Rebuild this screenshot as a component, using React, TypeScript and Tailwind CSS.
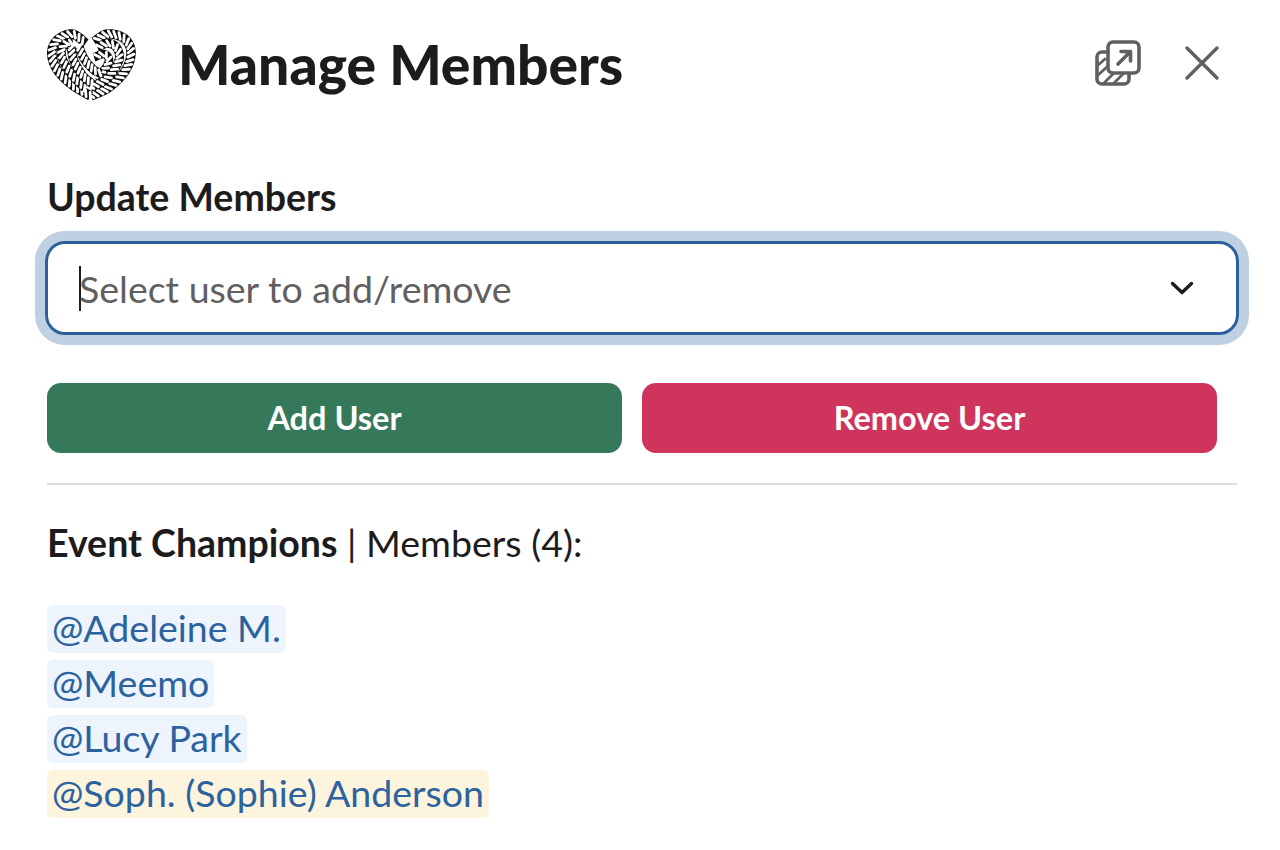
type P = [number, number];

const c = (x: number, y: number): P => [x / 3 - 18, y / 3 - 18];

const ropes: { pts: P[]; w: number }[] = [
  { w: 9.5, pts: [c(185, 258), c(240, 232), c(290, 180), c(306, 125), c(285, 85), c(235, 72), c(195, 95)] },
  { w: 9, pts: [c(185, 232), c(235, 205), c(270, 150), c(262, 112), c(235, 100), c(205, 112)] },
  { w: 8.5, pts: [c(195, 200), c(225, 180), c(240, 150), c(225, 132), c(195, 142)] },
  { w: 9.5, pts: [c(185, 258), c(130, 225), c(85, 180), c(68, 130), c(85, 90), c(130, 72), c(170, 100)] },
  { w: 9, pts: [c(168, 234), c(125, 190), c(97, 135), c(108, 102), c(132, 98)] },
  { w: 9, pts: [c(127, 112), c(134, 150), c(160, 195), c(190, 222)] },
  { w: 9, pts: [c(150, 112), c(168, 150), c(195, 180), c(216, 190)] },
];

function sample(pts: P[]): P[] {
  const out: P[] = [];
  for (let i = 0; i < pts.length - 1; i++) {
    const p0 = pts[Math.max(0, i - 1)];
    const p1 = pts[i];
    const p2 = pts[i + 1];
    const p3 = pts[Math.min(pts.length - 1, i + 2)];
    for (let k = 0; k < 30; k++) {
      const t = k / 30;
      const t2 = t * t;
      const t3 = t2 * t;
      const f = (a: number, b: number, d: number, e: number) =>
        0.5 * (2 * b + (d - a) * t + (2 * a - 5 * b + 4 * d - e) * t2 + (3 * b - a - 3 * d + e) * t3);
      out.push([f(p0[0], p1[0], p2[0], p3[0]), f(p0[1], p1[1], p2[1], p3[1])]);
    }
  }
  out.push(pts[pts.length - 1]);
  return out;
}

function Rope({ pts, w }: { pts: P[]; w: number }) {
  const s = sample(pts);
  const d = "M" + s.map((p) => `${p[0].toFixed(2)} ${p[1].toFixed(2)}`).join(" L");
  const bars: string[] = [];
  const step = 4.6;
  let acc = step;
  for (let i = 1; i < s.length; i++) {
    const dx = s[i][0] - s[i - 1][0];
    const dy = s[i][1] - s[i - 1][1];
    const l = Math.hypot(dx, dy) || 1;
    acc += l;
    if (acc >= step) {
      acc = 0;
      const tx = dx / l;
      const ty = dy / l;
      const nx = -ty;
      const ny = tx;
      const r = w / 2 - 1.9;
      const k = 1.9;
      bars.push(
        `M${(s[i][0] - nx * r - tx * k).toFixed(2)} ${(s[i][1] - ny * r - ty * k).toFixed(2)} L${(s[i][0] + nx * r + tx * k).toFixed(2)} ${(s[i][1] + ny * r + ty * k).toFixed(2)}`
      );
    }
  }
  return (
    <g>
      <path d={d} stroke="#0c0c0c" strokeWidth={w} strokeLinecap="butt" strokeLinejoin="round" />
      <path d={bars.join(" ")} stroke="#fff" strokeWidth="2.8" strokeLinecap="round" />
    </g>
  );
}

function Heart() {
  return (
    <svg width="90" height="74" viewBox="0 0 90 74" fill="none" className="shrink-0">
      {ropes.map((r, i) => (
        <Rope key={i} pts={r.pts} w={r.w} />
      ))}
    </svg>
  );
}

function ExpandIcon() {
  return (
    <svg width="48" height="48" viewBox="0 0 48 48" fill="none" stroke="#616061" strokeWidth="3.6" strokeLinecap="round" strokeLinejoin="round">
      <path d="M13 13 H7 a5 5 0 0 0 -5 5 V40 a5 5 0 0 0 5 5 H29 a5 5 0 0 0 5 -5 V35" />
      <rect x="13" y="3" width="31" height="31" rx="5" />
      <path d="M23 25 L35 13 M26 12.5 H35.5 V22" />
      <path d="M2 27 L10 20 M2 37 L13 27 M9 44 L18 35 M19 44 L28 35" strokeWidth="2.8" />
    </svg>
  );
}

const mentions = [
  { t: "@Adeleine M.", bg: "bg-[#edf4fb]" },
  { t: "@Meemo", bg: "bg-[#edf4fb]" },
  { t: "@Lucy Park", bg: "bg-[#edf4fb]" },
  { t: "@Soph. (Sophie) Anderson", bg: "bg-[#fdf4dd]" },
];

export default function App() {
  return (
    <div className="w-[1280px] h-[850px] bg-white overflow-hidden pl-[47px] pr-[43px] text-[#1d1c1d] font-['Lato','Noto_Sans',sans-serif]">
      <div className="h-[130px] flex items-center">
        <Heart />
        <h1 className="ml-[41px] text-[55.2px] font-black leading-none">Manage Members</h1>
        <div className="ml-auto flex items-center mr-[18px] gap-[42px] -mt-[4px]">
          <ExpandIcon />
          <svg width="34" height="34" viewBox="0 0 34 34" fill="none" stroke="#616061" strokeWidth="3.4" strokeLinecap="round">
            <path d="M2 2 L32 32 M32 2 L2 32" />
          </svg>
        </div>
      </div>

      <div className="h-[46px] mt-[44px] flex items-center text-[37.5px] font-bold leading-none">Update Members</div>

      <div className="mt-[21px] -mx-[2px] h-[94px] rounded-[20px] border-[3px] border-[#2c5f9b] ring-[10px] ring-[#bfd0e2] flex items-center pl-[31px] pr-[42px]">
        <span className="w-[2px] h-[45px] bg-[#1d1c1d] -mr-[2px] shrink-0" />
        <span className="text-[37.5px] text-[#616061] leading-none translate-y-[1px]">Select user to add/remove</span>
        <svg className="ml-auto" width="24" height="14" viewBox="0 0 24 14" fill="none" stroke="#1d1c1d" strokeWidth="3.4" strokeLinecap="round" strokeLinejoin="round">
          <path d="M2.5 2.5 L12 11.5 L21.5 2.5" />
        </svg>
      </div>

      <div className="mt-[48px] flex gap-[20px] w-[1170px]">
        <button className="flex-1 h-[70px] rounded-[14px] bg-[#35785a] text-white text-[32.5px] font-bold leading-none">Add User</button>
        <button className="flex-1 h-[70px] rounded-[14px] bg-[#cf355c] text-white text-[32.5px] font-bold leading-none">Remove User</button>
      </div>

      <div className="mt-[30px] h-[2px] bg-[#dddddd]" />

      <div className="mt-[35px] text-[37.5px] leading-[46px]">
        <span className="font-bold">Event Champions</span> | Members (4):
      </div>

      <div className="mt-[39px] flex flex-col gap-[7px] items-start">
        {mentions.map((m) => (
          <span key={m.t} className={`h-[48px] px-[5px] pb-[2px] rounded-[6px] flex items-center text-[37.5px] text-[#2b629f] leading-none ${m.bg}`}>{m.t}</span>
        ))}
      </div>
    </div>
  );
}
